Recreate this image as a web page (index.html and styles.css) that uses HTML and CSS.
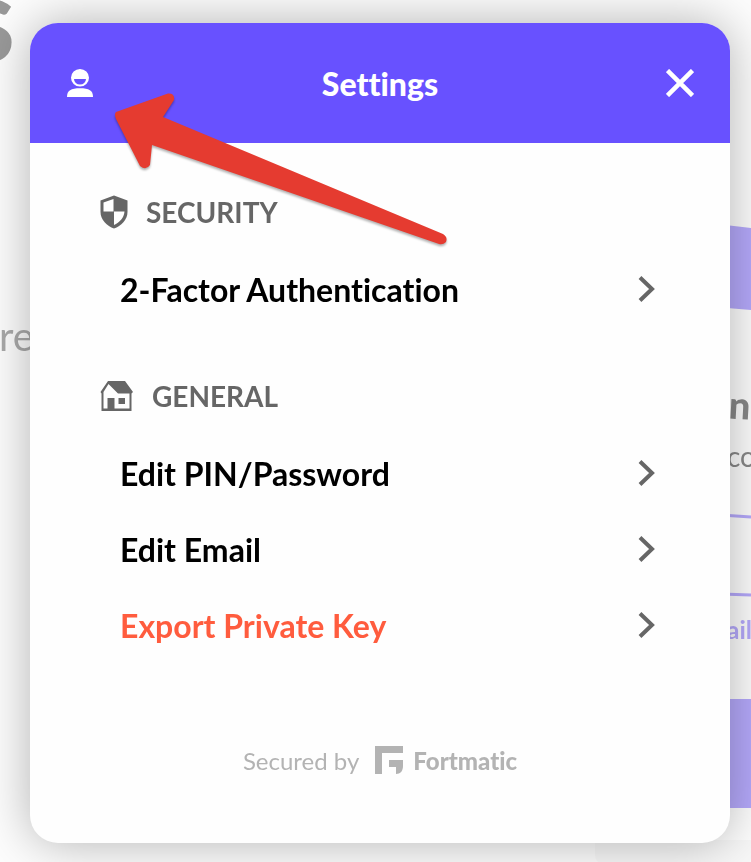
FILE: index.html
```html
<!DOCTYPE html>
<html lang="en">
<head>
  <meta charset="UTF-8">
  <meta name="viewport" content="width=device-width, initial-scale=1.0">
  <title>Settings</title>
  <link rel="stylesheet" href="styles.css">
</head>
<body>
  <!-- Page behind the modal -->
  <div class="backdrop" aria-hidden="true">
    <span class="bg-title">s</span>
    <span class="bg-copy">re</span>
    <svg class="bg-card" width="160" height="862" viewBox="0 0 160 862">
      <path d="M4 840V854Q4 859 7 862H160V840Z" fill="#f8f8f8"/>
      <path d="M100 221L160 228V310L100 305Z" fill="#b5a9fb"/>
      <path d="M100 513L160 517M100 593L160 595" stroke="#b5a9fb" stroke-width="3"/>
      <path d="M100 699H160V808H100Z" fill="#b5a9fb"/>
    </svg>
    <span class="bg-heading">n</span>
    <span class="bg-text">co</span>
    <span class="bg-link">ail</span>
  </div>

  <main class="modal">
    <header class="modal-header">
      <button class="icon-btn" aria-label="Account">
        <svg width="28" height="30" viewBox="0 0 28 30" fill="#fff">
          <path fill-rule="evenodd" d="M14 1a9 8.800 0 1 1 0 17.600a9 8.800 0 1 1 0-17.600ZM8 11a6 5.500 0 0 0 12 0Z"/>
          <path d="M1 29C1 22.500 5 20.300 14 20.300S27 22.500 27 29Z"/>
        </svg>
      </button>
      <h1>Settings</h1>
      <button class="icon-btn" aria-label="Close">
        <svg width="28" height="28" viewBox="0 0 28 28" fill="none" stroke="#fff" stroke-width="4.500">
          <path d="M1.500 1.500L26.500 26.500M26.500 1.500L1.500 26.500"/>
        </svg>
      </button>
    </header>

    <div class="modal-body">
      <section class="group">
        <h2>
          <svg width="28" height="34" viewBox="0 0 28 34">
            <path d="M14 .5L27.500 5.500V17C27.500 25 21 31 14 33.500C7 31 .5 25 .5 17V5.500Z" fill="#666"/>
            <path d="M13.500 4V16.500H3.500V7.500ZM14 16.500H24.500C24 23 19.500 27.500 14 30Z" fill="#fff"/>
          </svg>
          SECURITY
        </h2>
        <ul>
          <li><a href="#" class="row">2-Factor Authentication
            <svg width="18" height="26" viewBox="0 0 18 26"><path d="M2 1.500L14 13L2 24.500"/></svg></a></li>
        </ul>
      </section>

      <section class="group">
        <h2>
          <svg width="34" height="32" viewBox="0 0 34 32">
            <path fill-rule="evenodd" d="M8 1H25L33 12L31.500 13.500V31H1.500V13.500L.5 12ZM8.500 4L3.500 12V28.500H7.500V18H14.500V28.500H29.500V13.500H18Z" fill="#666"/>
            <path d="M18.500 18H25V24H18.500Z" fill="#666"/>
          </svg>
          GENERAL
        </h2>
        <ul>
          <li><a href="#" class="row">Edit PIN/Password
            <svg width="18" height="26" viewBox="0 0 18 26"><path d="M2 1.500L14 13L2 24.500"/></svg></a></li>
          <li><a href="#" class="row">Edit Email
            <svg width="18" height="26" viewBox="0 0 18 26"><path d="M2 1.500L14 13L2 24.500"/></svg></a></li>
          <li><a href="#" class="row danger">Export Private Key
            <svg width="18" height="26" viewBox="0 0 18 26"><path d="M2 1.500L14 13L2 24.500"/></svg></a></li>
        </ul>
      </section>
    </div>

    <footer class="modal-footer">
      <span>Secured by</span>
      <svg width="28" height="28" viewBox="0 0 28 28" fill="#b3b3b3">
        <path d="M0 0H28V7H7V28H0Z"/>
        <path d="M14 14H28V20C28 25 25.500 28 21 28V21H14Z"/>
      </svg>
      <strong>Fortmatic</strong>
    </footer>

    <!-- Pointer to the account button -->
    <svg class="arrow" width="340" height="160" viewBox="0 0 340 160">
      <path d="M9 27L61 8.500Q68 8 67 15L56 32L336 149Q341 152 339 157Q336 160 332 159L45 60L43 80Q39 86 33 81L9 34Q7 29 9 27Z"/>
    </svg>
  </main>
</body>
</html>
```
FILE: styles.css
```css
/* General Styles */
* {
  box-sizing: border-box;
}

body {
  font-family: 'Lato', 'Open Sans', sans-serif;
  font-variant-ligatures: none;
  background: #fdfdfd;
  margin: 0;
  padding: 23px 21px 19px 30px;
}

/* Page behind the modal */
.backdrop {
  position: fixed;
  inset: 0;
  overflow: hidden;
}

.backdrop span {
  position: absolute;
  line-height: 1;
}

.bg-title {
  left: -38px;
  top: -44px;
  font-size: 120px;
  font-weight: 900;
  color: #999;
}

.bg-copy {
  left: -1px;
  top: 316px;
  font-size: 40px;
  color: #aaa;
}

.bg-card {
  position: absolute;
  right: 0;
  top: 0;
}

.backdrop .bg-heading {
  right: 0;
  top: 385px;
  font-size: 38px;
  font-weight: 900;
  color: #888;
  transform: rotate(3deg);
}

.backdrop .bg-text {
  right: -5px;
  top: 442px;
  font-size: 28px;
  color: #888;
}

.backdrop .bg-link {
  right: -1px;
  top: 617px;
  font-size: 25px;
  font-weight: bold;
  color: #b5a9fb;
}

/* Modal */
.modal {
  position: relative;
  background: #fefefe;
  border-radius: 28px;
  box-shadow: 0 0 50px rgba(0, 0, 0, 0.3);
}

.modal-header {
  display: flex;
  justify-content: space-between;
  align-items: center;
  height: 120px;
  padding: 0 36px;
  background: #6851ff;
  color: #fff;
  border-radius: 28px 28px 0 0;
}

h1 {
  margin: 0;
  font-size: 32px;
  font-weight: 900;
}

.icon-btn {
  display: flex;
  padding: 0;
  border: none;
  background: none;
  cursor: pointer;
}

/* Settings groups */
.modal-body {
  padding: 45px 70px 0;
}

.group {
  margin-bottom: 45px;
}

h2 {
  display: flex;
  align-items: center;
  gap: 18px;
  height: 48px;
  margin: 0 0 15px;
  font-size: 28px;
  font-weight: bold;
  color: #666;
}

ul {
  list-style: none;
  margin: 0;
  padding: 0;
}

.row {
  display: flex;
  justify-content: space-between;
  align-items: center;
  height: 76px;
  padding: 0 4px 0 20px;
  font-size: 32px;
  font-weight: bold;
  color: #000;
  text-decoration: none;
}

.row svg {
  fill: none;
  stroke: #666;
  stroke-width: 4;
}

.danger {
  color: #ff5c3e;
}

/* Footer */
.modal-footer {
  display: flex;
  justify-content: center;
  align-items: center;
  gap: 16px;
  height: 32px;
  margin-top: 81px;
  font-size: 24px;
  color: #b3b3b3;
}

.modal-footer strong {
  margin-left: -6px;
  font-weight: 900;
}

.modal::after {
  content: '';
  display: block;
  height: 67px;
}

.arrow {
  position: absolute;
  left: 77px;
  top: 62px;
  fill: #e53b30;
  filter: drop-shadow(0 2px 1px rgba(0, 0, 0, 0.3));
  pointer-events: none;
}
```
